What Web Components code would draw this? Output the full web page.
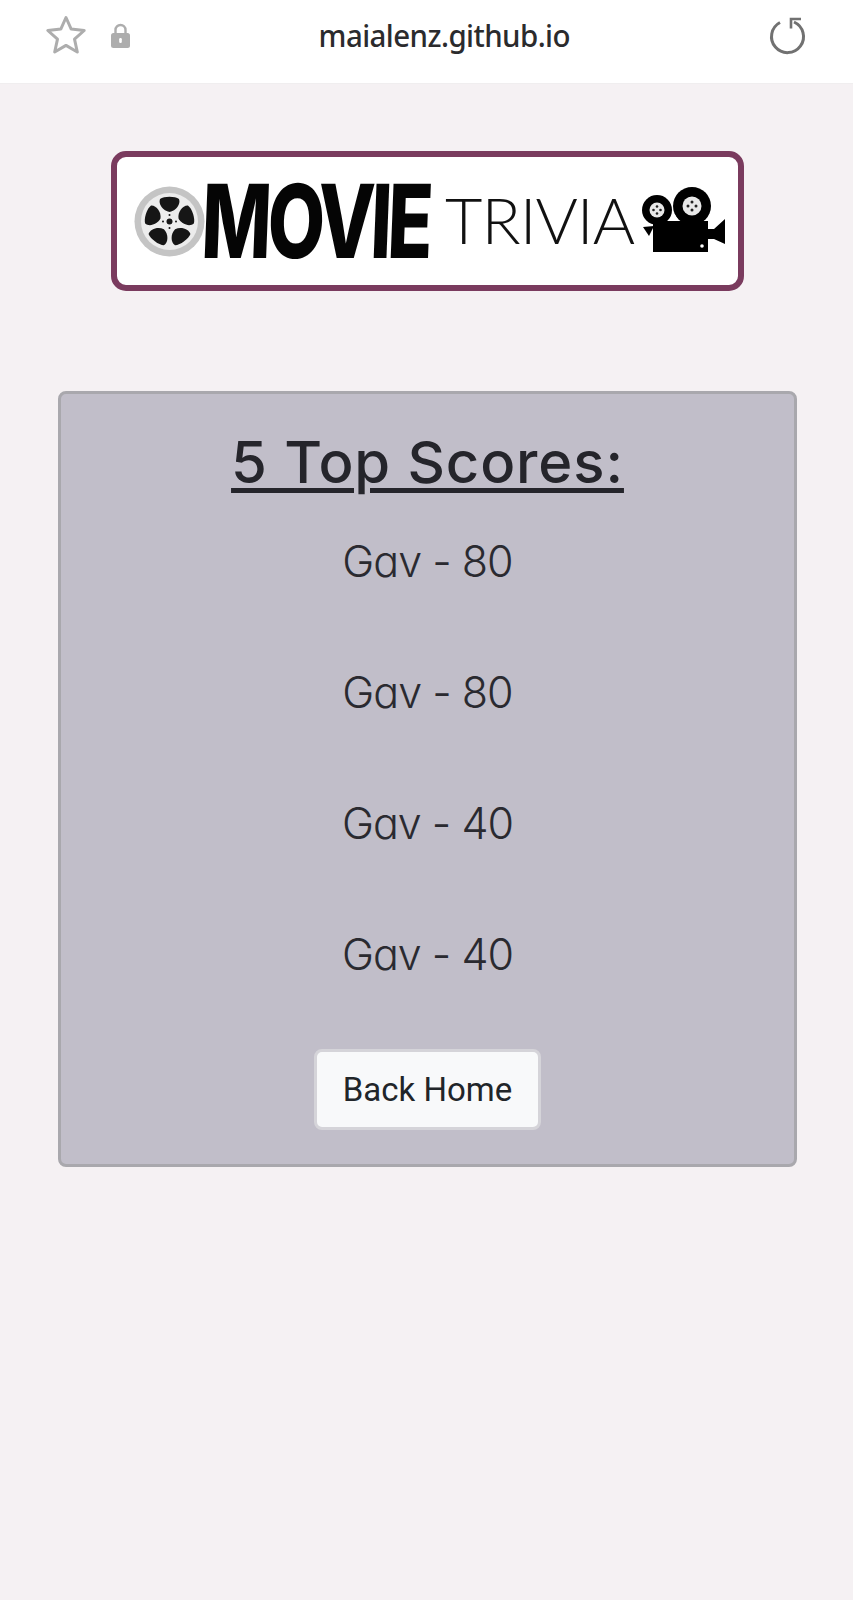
<!DOCTYPE html>
<html lang="en">
<head>
<meta charset="utf-8">
<title>Movie Trivia</title>
<style>
  html, body { margin: 0; padding: 0; }
  body { background: #f5f1f3; width: 853px; height: 1600px; overflow: hidden; }
</style>
</head>
<body>
<browser-bar host-name="maialenz.github.io"></browser-bar>
<movie-logo></movie-logo>
<score-card heading="5 Top Scores:">
  <score-row>Gav - 80</score-row>
  <score-row>Gav - 80</score-row>
  <score-row>Gav - 40</score-row>
  <score-row>Gav - 40</score-row>
  <home-button slot="action">Back Home</home-button>
</score-card>

<script>
class BrowserBar extends HTMLElement {
  constructor() {
    super();
    this.attachShadow({ mode: "open" }).innerHTML = `
      <style>
        :host {
          display: grid;
          grid-template-columns: 46px 40px 25px 19px 1fr 36px 48px;
          align-items: center;
          height: 70px;
          padding-bottom: 13px;
          background: #fff;
          border-bottom: 1px solid #f0eeef;
        }
        .star { grid-column: 2; }
        .lock { grid-column: 4; }
        .host-name {
          grid-column: 5;
          text-align: center;
          font: 500 31px "Noto Sans", sans-serif;
          letter-spacing: -0.6px;
          color: #2b2b2d;
          padding-right: 11px;
          transform: scaleX(0.95);
        }
        .reload { grid-column: 6; }
        svg { display: block; overflow: visible; }
      </style>
      <svg class="star" width="40" height="40" viewBox="0 0 40 40" fill="none" stroke="#adadad" stroke-width="3" stroke-linejoin="round">
        <path d="M20 2.5l5.2 11.6 13 1.4-9.7 8.6 2.8 12.9L20 30.4 8.7 37l2.8-12.9-9.7-8.6 13-1.4z"/>
      </svg>
      <svg class="lock" width="19" height="25" viewBox="0 0 19 25">
        <path d="M4.5 11V7a5 5 0 0 1 10 0v4" fill="none" stroke="#adadad" stroke-width="2.4"/>
        <rect x="0" y="10" width="19" height="15" rx="2.5" fill="#adadad"/>
        <rect x="8.2" y="15" width="2.6" height="5" rx="1.2" fill="#fff"/>
      </svg>
      <span class="host-name"></span>
      <svg class="reload" width="36" height="36" viewBox="0 0 36 36" fill="none" stroke="#717171" stroke-width="3">
        <path d="M11 5.500A16 16 0 1 0 25 5"/>
        <path d="M22 11.500V2h10" stroke-width="2.6"/>
      </svg>`;
    this.shadowRoot.querySelector(".host-name").textContent = this.getAttribute("host-name");
  }
}

class MovieLogo extends HTMLElement {
  constructor() {
    super();
    this.attachShadow({ mode: "open" }).innerHTML = `
      <style>
        :host {
          display: block;
          width: 633px;
          height: 140px;
          margin: 67px 0 0 111px;
          box-sizing: border-box;
          background: #fff;
          border: 6px solid #7a3b5e;
          border-radius: 15px;
          overflow: hidden;
        }
        .row {
          display: flex;
          align-items: center;
          height: 100%;
          padding-left: 17px;
        }
        .movie {
          font: 800 74px/1 Inter, "Liberation Sans", sans-serif;
          color: #050505;
          letter-spacing: -4px;
          transform: scaleY(1.38) skewX(-3deg);
          width: 226px;
          margin-left: -3px;
        }
        .trivia {
          font: 300 64px/1 Lato, "Liberation Sans", sans-serif;
          color: #111;
          letter-spacing: -1px;
          transform: scaleX(1.01);
          transform-origin: left center;
          width: 193px;
          margin: 0 0 2px 17px;
          white-space: nowrap;
        }
        svg { display: block; flex: none; }
      </style>
      <div class="row">
        <svg width="71" height="71" viewBox="0 0 71 71">
          <circle cx="35.500" cy="35.500" r="35" fill="#c4c4c4"/>
          <circle cx="35.500" cy="35.500" r="28.500" fill="#ececec"/>
          <g fill="#161616">
            <path id="blade" d="M26 13C30 10 41 10 45 13 47 18 42 25 35.500 26 29 25 24 18 26 13z"/>
            <use href="#blade" transform="rotate(72 35.500 35.500)"/>
            <use href="#blade" transform="rotate(144 35.500 35.500)"/>
            <use href="#blade" transform="rotate(216 35.500 35.500)"/>
            <use href="#blade" transform="rotate(288 35.500 35.500)"/>
            <circle cx="35.500" cy="35.500" r="3"/>
            <circle cx="35.500" cy="29" r="1"/><circle cx="35.500" cy="42" r="1"/>
            <circle cx="29" cy="35.500" r="1"/><circle cx="42" cy="35.500" r="1"/>
          </g>
        </svg>
        <span class="movie">MOVIE</span>
        <span class="trivia">TRIVIA</span>
        <svg width="84" height="66" viewBox="0 0 84 66" style="margin:-2px 0 0 4px">
          <circle cx="15" cy="23" r="15" fill="#000"/>
          <circle cx="15" cy="23" r="7.500" fill="#e8e8e8"/>
          <circle cx="50" cy="19" r="19" fill="#000"/>
          <circle cx="50" cy="19" r="9.500" fill="#e8e8e8"/>
          <g fill="#222">
            <circle cx="15" cy="19.500" r="1.300"/><circle cx="11.500" cy="23" r="1.300"/><circle cx="18.500" cy="23" r="1.300"/><circle cx="15" cy="26.500" r="1.300"/>
            <circle cx="50" cy="15" r="1.500"/><circle cx="46" cy="19" r="1.500"/><circle cx="54" cy="19" r="1.500"/><circle cx="50" cy="23" r="1.500"/>
          </g>
          <path d="M11 34h55v31H11z" fill="#000"/>
          <path d="M1 40l11-1-5 10z" fill="#000"/>
          <path d="M66 42h6l11-10v25l-11-5h-6z" fill="#000"/>
          <circle cx="60" cy="59" r="1.800" fill="#fff"/>
          <path d="M29 34l4-6 4 6z" fill="#fff"/>
        </svg>
      </div>`;
  }
}

class ScoreCard extends HTMLElement {
  constructor() {
    super();
    this.attachShadow({ mode: "open" }).innerHTML = `
      <style>
        :host {
          display: block;
          width: 739px;
          height: 776px;
          margin: 100px 0 0 58px;
          box-sizing: border-box;
          background: #c1bec9;
          border: 3px solid #a9a8ad;
          border-radius: 8px;
          text-align: center;
          color: #25252b;
        }
        h1 {
          margin: 30px 0 0;
          font: 450 58px/76px Inter, "Liberation Sans", sans-serif;
          letter-spacing: 0.9px;
          text-decoration: underline;
          text-decoration-thickness: 5px;
          text-underline-offset: 5px;
        }
        .rows { display: flex; flex-direction: column; gap: 60px; margin-top: 26px; }
        .action { display: flex; justify-content: center; margin-top: 59px; }
      </style>
      <h1></h1>
      <div class="rows"><slot></slot></div>
      <div class="action"><slot name="action"></slot></div>`;
    this.shadowRoot.querySelector("h1").textContent = this.getAttribute("heading");
  }
}

class ScoreRow extends HTMLElement {
  constructor() {
    super();
    this.attachShadow({ mode: "open" }).innerHTML = `
      <style>
        :host {
          display: block;
          height: 71px;
          font: 300 43px/71px Inter, Lato, sans-serif;
          font-feature-settings: "cv11";
          letter-spacing: -1px;
          color: #2a2a30;
        }
      </style>
      <slot></slot>`;
  }
}

class HomeButton extends HTMLElement {
  constructor() {
    super();
    this.attachShadow({ mode: "open" }).innerHTML = `
      <style>
        :host {
          display: block;
          width: 227px;
          height: 81px;
          box-sizing: border-box;
          background: #f8f9fa;
          border: 3px solid #d5d4d9;
          border-radius: 8px;
          font: 400 33px/75px Roboto, sans-serif;
          color: #212529;
          text-align: center;
        }
      </style>
      <slot></slot>`;
  }
}

customElements.define("browser-bar", BrowserBar);
customElements.define("movie-logo", MovieLogo);
customElements.define("score-card", ScoreCard);
customElements.define("score-row", ScoreRow);
customElements.define("home-button", HomeButton);
</script>
</body>
</html>
